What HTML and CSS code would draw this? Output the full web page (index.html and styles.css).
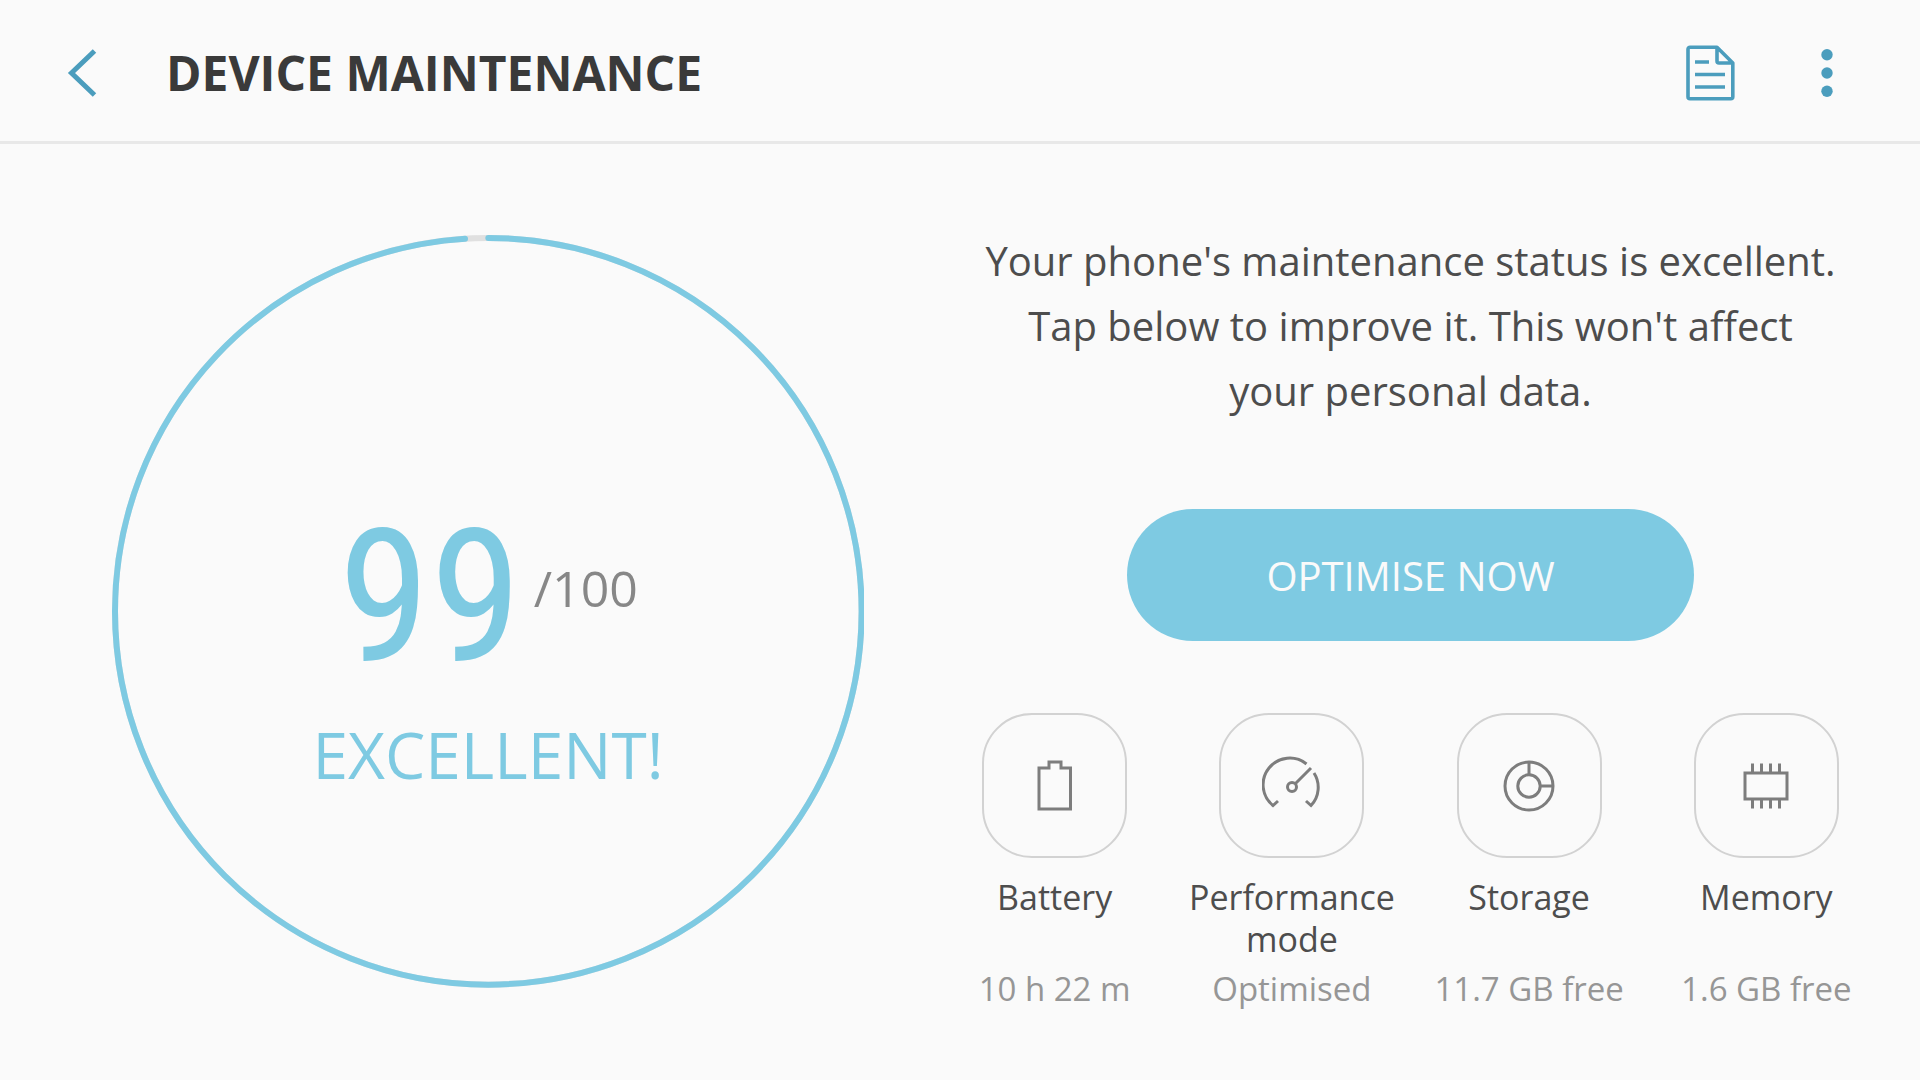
FILE: index.html
```
<!DOCTYPE html>
<html lang="en">
<head>
  <meta charset="utf-8">
  <meta name="viewport" content="width=device-width, initial-scale=1">
  <title>Device maintenance</title>
  <link rel="stylesheet" href="styles.css">
</head>
<body>
  <header class="app-bar">
    <button class="icon-button" type="button" aria-label="Back">
      <svg width="30" height="48" viewBox="0 0 30 48" fill="none" stroke="currentColor" stroke-width="5"><path d="M27.500 2 4.500 24l23 22"/></svg>
    </button>
    <h1 class="app-bar__title">DEVICE MAINTENANCE</h1>
    <div class="app-bar__actions">
      <button class="icon-button" type="button" aria-label="Report">
        <svg width="50" height="56" viewBox="0 0 50 56" fill="none" stroke="currentColor" stroke-width="3.600" stroke-linejoin="round"><path d="M2 4.200a2 2 0 0 1 2-2H31L46.800 18V51.800a2 2 0 0 1-2 2H4a2 2 0 0 1-2-2zM31 2.200V16a2 2 0 0 0 2 2H46.800M9 17h14M9 29.500h30M9 42h30"/></svg>
      </button>
      <button class="icon-button" type="button" aria-label="More options">
        <svg width="12" height="48" viewBox="0 0 12 48" fill="currentColor"><circle cx="6" cy="5.700" r="5.700"/><circle cx="6" cy="24" r="5.700"/><circle cx="6" cy="42.300" r="5.700"/></svg>
      </button>
    </div>
  </header>

  <main class="content">
    <section class="score" aria-label="Maintenance score">
      <svg class="score__ring" viewBox="0 0 753 753" fill="none" stroke-width="6" aria-hidden="true">
        <circle class="score__track" cx="376.500" cy="376.500" r="373.500"/>
        <circle class="score__value" cx="376.500" cy="376.500" r="373.500" pathLength="100" stroke-dasharray="99 1" stroke-linecap="round" transform="rotate(-90 376.500 376.500)"/>
      </svg>
      <div class="score__text">
        <p class="score__row"><span class="score__number">99</span><span class="score__total">/100</span></p>
        <p class="score__grade">EXCELLENT!</p>
      </div>
    </section>

    <section class="panel">
      <p class="panel__message">Your phone's maintenance status is excellent. Tap below to improve it. This won't affect your personal data.</p>
      <button class="optimise" type="button">OPTIMISE NOW</button>
      <ul class="tiles">
        <li class="tile">
          <button class="tile__button" type="button" aria-labelledby="t-battery">
            <svg class="tile__icon" viewBox="0 0 60 60"><path d="M24 12V6h12v6h9.500v41h-31.500V12z"/></svg>
          </button>
          <span class="tile__label" id="t-battery">Battery</span>
          <span class="tile__status">10 h 22 m</span>
        </li>
        <li class="tile">
          <button class="tile__button" type="button" aria-labelledby="t-performance">
            <svg class="tile__icon" viewBox="0 0 60 60"><path d="M44.500 8A26.500 26.500 0 0 0 11 49.500l5-4.500M52 17A26.500 26.500 0 0 1 49 49.500L44 45M33.500 27.500 49 12"/><circle cx="30" cy="31" r="4.500"/></svg>
          </button>
          <span class="tile__label" id="t-performance">Performance mode</span>
          <span class="tile__status">Optimised</span>
        </li>
        <li class="tile">
          <button class="tile__button" type="button" aria-labelledby="t-storage">
            <svg class="tile__icon" viewBox="0 0 60 60"><circle cx="30" cy="30" r="24"/><circle cx="30" cy="30" r="11.200"/><path d="M30 6v12.800M41.200 30H54"/></svg>
          </button>
          <span class="tile__label" id="t-storage">Storage</span>
          <span class="tile__status">11.7 GB free</span>
        </li>
        <li class="tile">
          <button class="tile__button" type="button" aria-labelledby="t-memory">
            <svg class="tile__icon" viewBox="0 0 60 60"><path d="M9 17h42v26H9zM16.500 17V7.500M25.500 17V7.500M34.500 17V7.500M43.500 17V7.500M16.500 43v9.500M25.500 43v9.500M34.500 43v9.500M43.500 43v9.500"/></svg>
          </button>
          <span class="tile__label" id="t-memory">Memory</span>
          <span class="tile__status">1.6 GB free</span>
        </li>
      </ul>
    </section>
  </main>
</body>
</html>
```
FILE: styles.css
```
:root {
  --accent: #4b9dbd;
  --sky: #7ecae2;
  --page: #fafafa;
}

* {
  box-sizing: border-box;
}

body,
h1,
p,
ul {
  margin: 0;
  padding: 0;
}

body {
  background: var(--page);
  color: #4d4d4d;
  font-family: "Open Sans", "Noto Sans", sans-serif;
}

button {
  border: 0;
  background: none;
  padding: 0;
  font: inherit;
  cursor: pointer;
}

svg {
  display: block;
}

/* Top bar */
.app-bar {
  display: flex;
  align-items: center;
  min-height: 144px;
  padding: 4px 45px 0 34px;
  border-bottom: 3px solid #e8e8e8;
}

.icon-button {
  display: grid;
  place-items: center;
  width: 96px;
  height: 96px;
  color: var(--accent);
}

.app-bar__title {
  margin-left: 36px;
  color: #3a3a3a;
  font-size: 48px;
  font-weight: 700;
  line-height: 64px;
}

.app-bar__actions {
  display: flex;
  gap: 20px;
  margin-left: auto;
}

/* Two panes */
.content {
  display: grid;
  grid-template-columns: 896fr 949fr;
  padding: 84px 35px 64px 40px;
}

/* Score dial */
.score {
  display: grid;
  align-self: start;
  justify-items: center;
  padding-top: 7px;
}

.score__ring,
.score__text {
  grid-area: 1 / 1;
}

.score__ring {
  width: 84%;
}

.score__track {
  stroke: #e0e0e0;
}

.score__value {
  stroke: var(--sky);
}

.score__text {
  align-self: center;
  padding-top: 92px;
  text-align: center;
}

.score__row {
  display: flex;
  align-items: center;
  justify-content: center;
  gap: 12px;
}

.score__number {
  color: var(--sky);
  font-family: "Roboto Condensed", Roboto, sans-serif;
  font-size: 186px;
  line-height: 140px;
}

.score__total {
  padding-bottom: 18px;
  color: #878787;
  font-size: 50px;
  line-height: 64px;
}

.score__grade {
  margin-top: 56px;
  color: var(--sky);
  font-size: 64px;
  line-height: 64px;
}

/* Message, action and shortcuts */
.panel {
  display: flex;
  flex-direction: column;
  align-items: center;
}

.panel__message {
  max-width: 856px;
  font-size: 40px;
  line-height: 65px;
  text-align: center;
}

.optimise {
  width: 567px;
  height: 132px;
  margin-top: 86px;
  border-radius: 66px;
  background: var(--sky);
  color: #fafafa;
  font-size: 40px;
}

.tiles {
  display: grid;
  grid-template-columns: repeat(4, 1fr);
  grid-template-rows: repeat(3, auto);
  align-self: stretch;
  margin-top: 72px;
  list-style: none;
}

.tile {
  display: grid;
  grid-row: span 3;
  grid-template-rows: subgrid;
  justify-items: center;
  text-align: center;
}

.tile__button {
  display: grid;
  place-items: center;
  width: 145px;
  height: 145px;
  border: 2px solid #d2d2d2;
  border-radius: 50px;
}

.tile__icon {
  width: 60px;
  height: 60px;
  fill: none;
  stroke: #7d7d7d;
  stroke-width: 3;
}

.tile__label {
  margin: 18px 0 8px;
  font-size: 34px;
  line-height: 42px;
}

.tile__status {
  color: #969696;
  font-size: 33px;
  line-height: 42px;
}
```
